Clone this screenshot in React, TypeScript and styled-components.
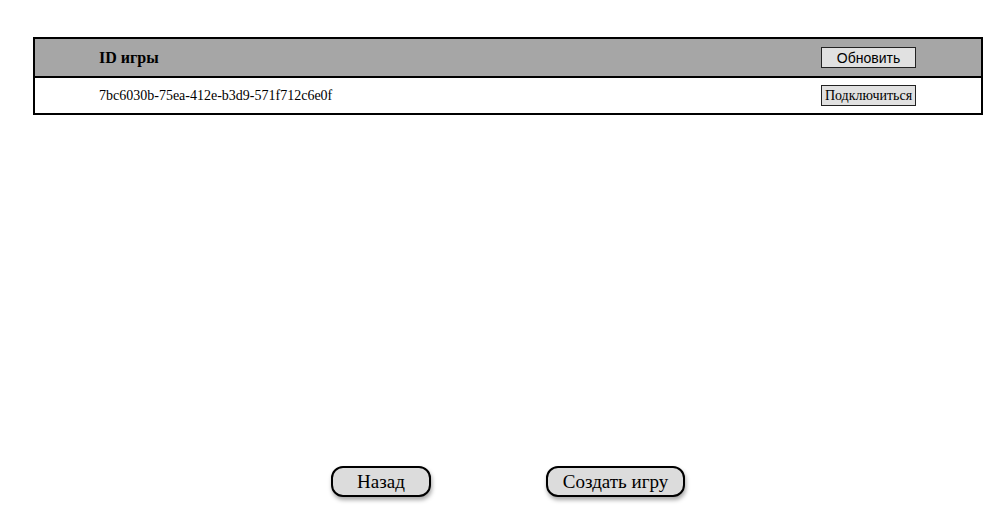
import React from 'react';
import styled, { createGlobalStyle } from 'styled-components';

const GlobalStyle = createGlobalStyle`
  html, body {
    margin: 0;
    padding: 0;
    background: #fff;
  }
  body {
    font-family: 'Liberation Serif', 'Times New Roman', serif;
    color: #000;
  }
`;

const Page = styled.div`
  width: 1000px;
  height: 524px;
  display: flex;
  flex-direction: column;
  box-sizing: border-box;
  padding: 37px 17px 0 33px;
`;

const Table = styled.table`
  width: 950px;
  border-collapse: collapse;
  border: 2px solid #000;
`;

const HeadRow = styled.tr`
  background: #a6a6a6;
  height: 39px;
  border-bottom: 2px solid #000;
`;

const BodyRow = styled.tr`
  height: 37px;
`;

const IdHead = styled.th`
  text-align: left;
  padding: 0 0 0 64px;
  font-size: 16px;
  font-weight: bold;
`;

const IdCell = styled.td`
  padding: 0 0 0 64px;
  font-size: 14px;
`;

const ActionCell = styled.td`
  width: 160px;
  padding: 0;
`;

const SmallButton = styled.button<{ $sans?: boolean }>`
  display: block;
  width: 95px;
  height: 21px;
  margin: 0;
  padding: 0;
  border: 1px solid #222;
  background: #e1e1e1;
  font-family: ${(p) =>
    p.$sans ? "'Liberation Sans', Arial, sans-serif" : "'Liberation Serif', 'Times New Roman', serif"};
  font-size: 14px;
  color: #000;
`;

const Footer = styled.div`
  margin-top: auto;
  margin-bottom: 27px;
  margin-left: -33px;
  margin-right: -17px;
  display: flex;
  justify-content: center;
  gap: 115px;
  padding-left: 16px;
`;

const BigButton = styled.button<{ $w: number }>`
  width: ${(p) => p.$w}px;
  height: 31px;
  border: 2px solid #000;
  border-radius: 12px;
  background: #dcdcdc;
  box-shadow: 1px 3px 4px rgba(0, 0, 0, 0.35);
  font-family: 'Liberation Serif', 'Times New Roman', serif;
  font-size: 19px;
  color: #000;
  padding: 0;
`;

export default function App() {
  const games = ['7bc6030b-75ea-412e-b3d9-571f712c6e0f'];
  return (
    <>
      <GlobalStyle />
      <Page>
        <Table>
          <thead>
            <HeadRow>
              <IdHead>ID игры</IdHead>
              <ActionCell>
                <SmallButton $sans>Обновить</SmallButton>
              </ActionCell>
            </HeadRow>
          </thead>
          <tbody>
            {games.map((id) => (
              <BodyRow key={id}>
                <IdCell>{id}</IdCell>
                <ActionCell>
                  <SmallButton>Подключиться</SmallButton>
                </ActionCell>
              </BodyRow>
            ))}
          </tbody>
        </Table>
        <Footer>
          <BigButton $w={100}>Назад</BigButton>
          <BigButton $w={139}>Создать игру</BigButton>
        </Footer>
      </Page>
    </>
  );
}
